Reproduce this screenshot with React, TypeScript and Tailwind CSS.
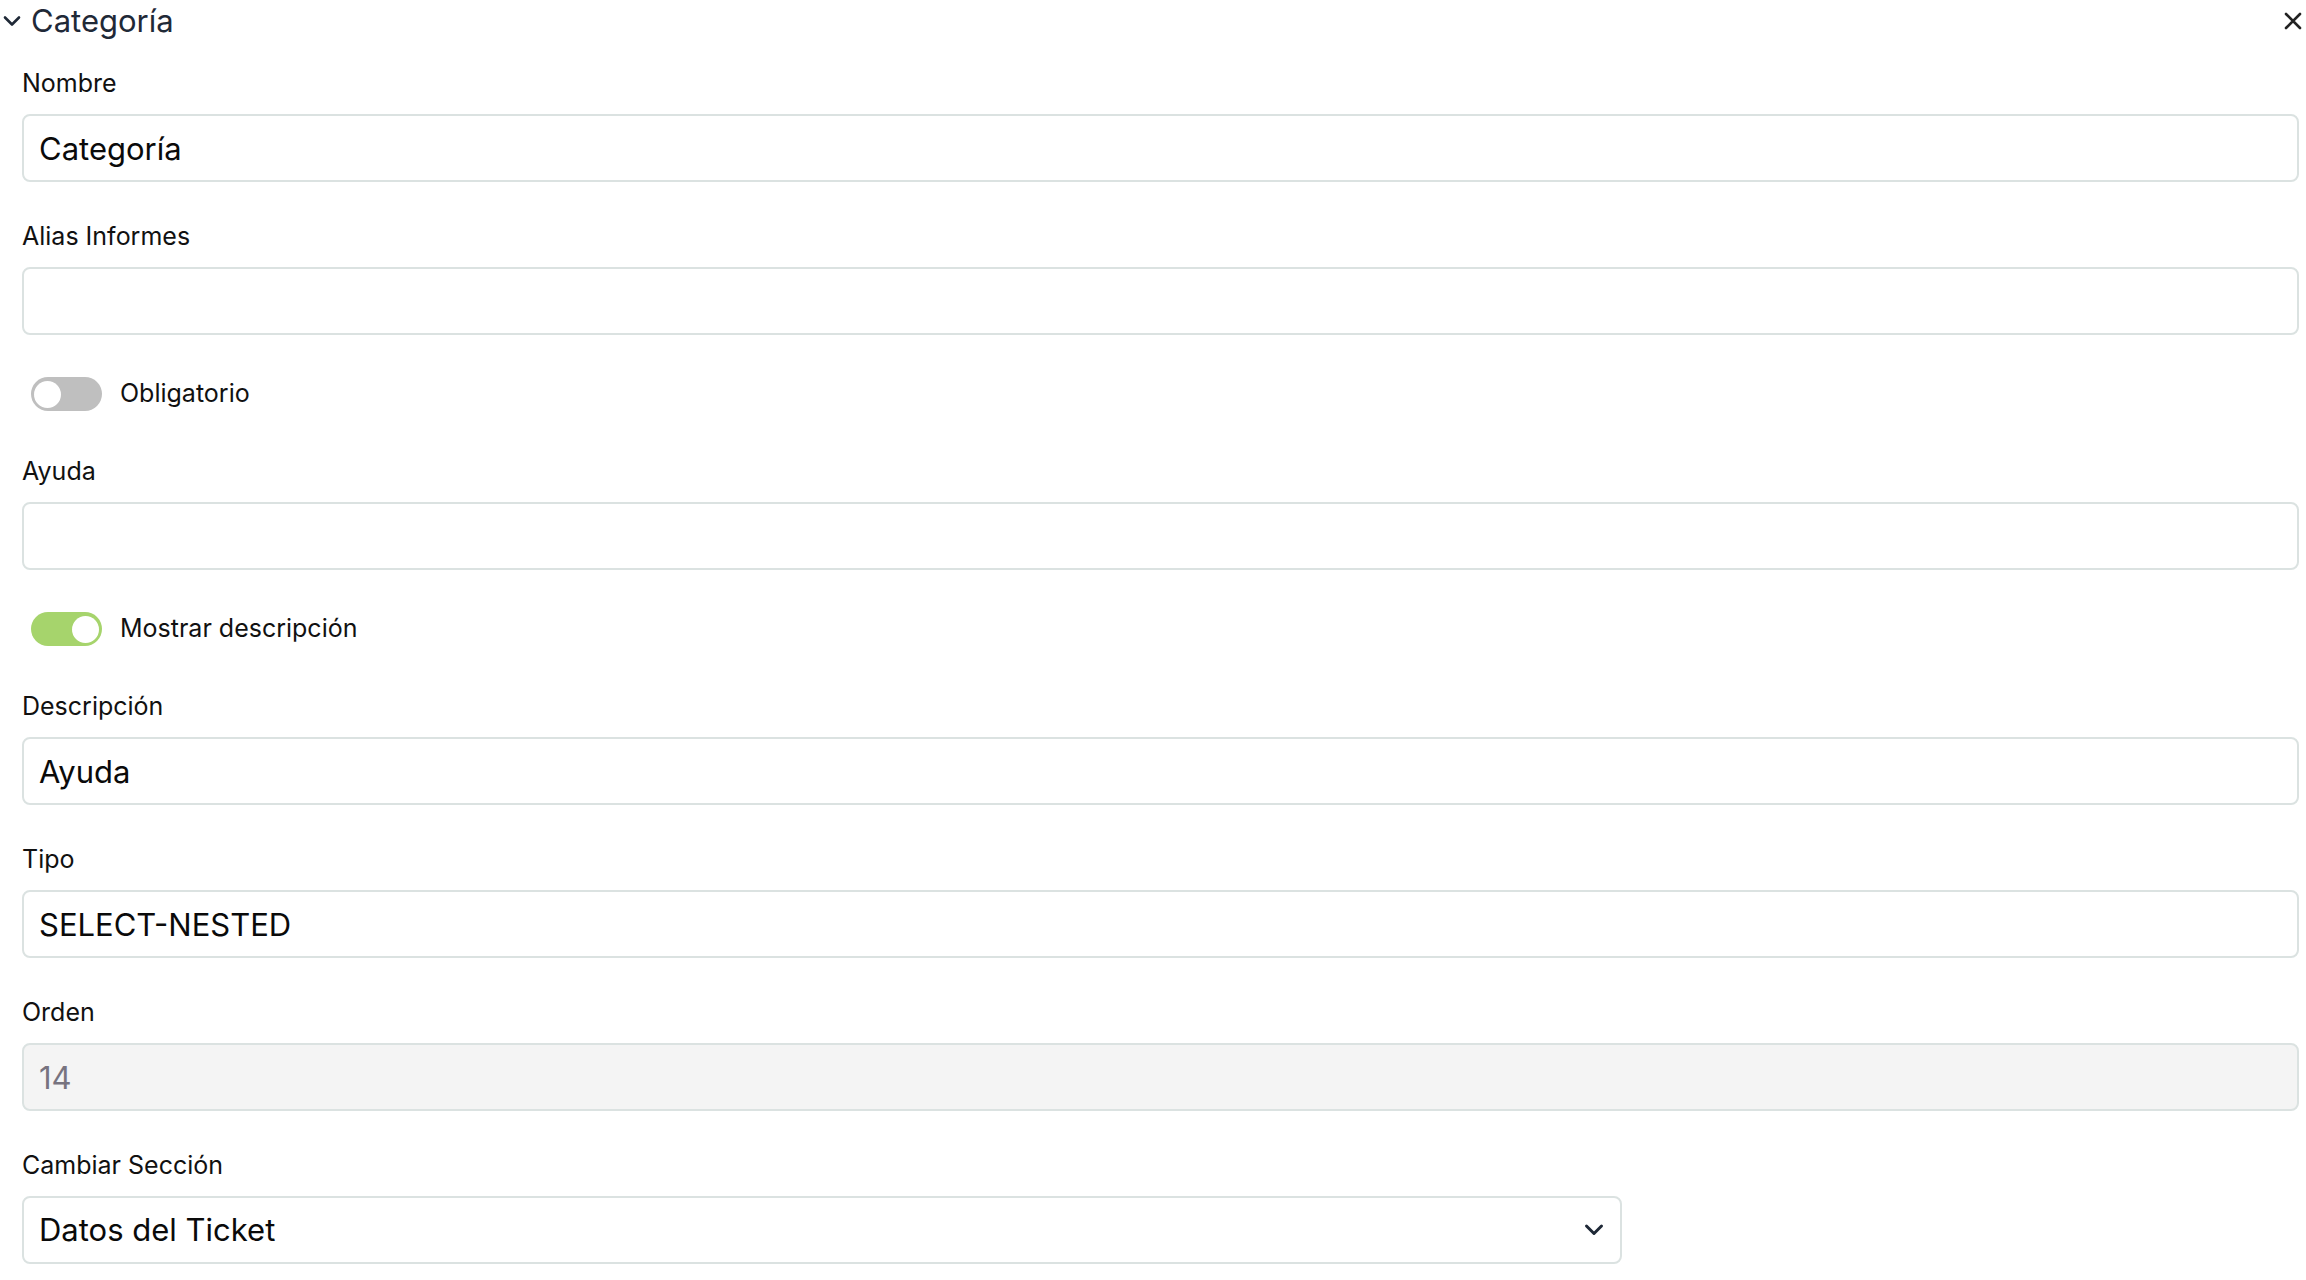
import { useState } from "react";

function Field({ label, children }: { label: string; children: React.ReactNode }) {
  return (
    <div className="flex flex-col">
      <label className="text-[25px] leading-[36px] text-[#111111] mb-[13px]">{label}</label>
      {children}
    </div>
  );
}

function TextInput({ value, disabled }: { value?: string; disabled?: boolean }) {
  return (
    <input
      defaultValue={value}
      disabled={disabled}
      className={`h-[68px] w-full rounded-[8px] border-2 border-[#dbe2e1] px-[15px] text-[31px] outline-none ${
        disabled ? "bg-[#f4f4f4] text-[#77737f]" : "bg-white text-[#0a0a0a]"
      }`}
    />
  );
}

function Toggle({ label, initial }: { label: string; initial: boolean }) {
  const [on, setOn] = useState(initial);
  return (
    <div className="flex h-[46px] items-center gap-[18px] pl-[9px]">
      <button
        type="button"
        onClick={() => setOn(!on)}
        className={`flex h-[34px] w-[71px] items-center rounded-full px-[3px] ${
          on ? "justify-end bg-[#a6d46c]" : "justify-start bg-[#bfbfbf]"
        }`}
      >
        <span className="h-[27px] w-[27px] rounded-full bg-white" />
      </button>
      <span className="text-[25px] text-[#111111]">{label}</span>
    </div>
  );
}

export default function App() {
  return (
    <div className="min-h-screen bg-white font-['Inter',sans-serif]">
      <div className="flex h-[42px] items-center justify-between">
        <div className="flex items-center gap-[10px] pl-[3px]">
          <svg width="18" height="12" viewBox="0 0 18 12" fill="none" stroke="#1f2937" strokeWidth="2.6" strokeLinecap="round" strokeLinejoin="round">
            <path d="M2 2.5l7 7 7-7" />
          </svg>
          <span className="text-[31px] text-[#1f2937]">Categoría</span>
        </div>
        <button type="button" className="mr-[1px] p-[2px]">
          <svg width="20" height="20" viewBox="0 0 20 20" fill="none" stroke="#222222" strokeWidth="2.6" strokeLinecap="round">
            <path d="M3 3l14 14M17 3L3 17" />
          </svg>
        </button>
      </div>

      <form className="flex flex-col gap-[36px] pl-[22px] pr-[7px] pt-[23px] pb-[20px]">
        <Field label="Nombre">
          <TextInput value="Categoría" />
        </Field>
        <Field label="Alias Informes">
          <TextInput />
        </Field>
        <Toggle label="Obligatorio" initial={false} />
        <Field label="Ayuda">
          <TextInput />
        </Field>
        <Toggle label="Mostrar descripción" initial={true} />
        <Field label="Descripción">
          <TextInput value="Ayuda" />
        </Field>
        <Field label="Tipo">
          <TextInput value="SELECT-NESTED" />
        </Field>
        <Field label="Orden">
          <TextInput value="14" disabled />
        </Field>
        <Field label="Cambiar Sección">
          <div className="relative w-[1600px]">
            <select
              defaultValue="ticket"
              className="h-[68px] w-full appearance-none rounded-[8px] border-2 border-[#dbe2e1] bg-white px-[15px] text-[31px] text-[#0a0a0a] outline-none"
            >
              <option value="ticket">Datos del Ticket</option>
              <option value="cliente">Datos del Cliente</option>
            </select>
            <svg
              className="pointer-events-none absolute right-[18px] top-1/2 -translate-y-1/2"
              width="20"
              height="13"
              viewBox="0 0 20 13"
              fill="none"
              stroke="#1f2937"
              strokeWidth="3"
              strokeLinecap="round"
              strokeLinejoin="round"
            >
              <path d="M2.5 2.5l7.5 7.5 7.5-7.5" />
            </svg>
          </div>
        </Field>
      </form>
    </div>
  );
}
